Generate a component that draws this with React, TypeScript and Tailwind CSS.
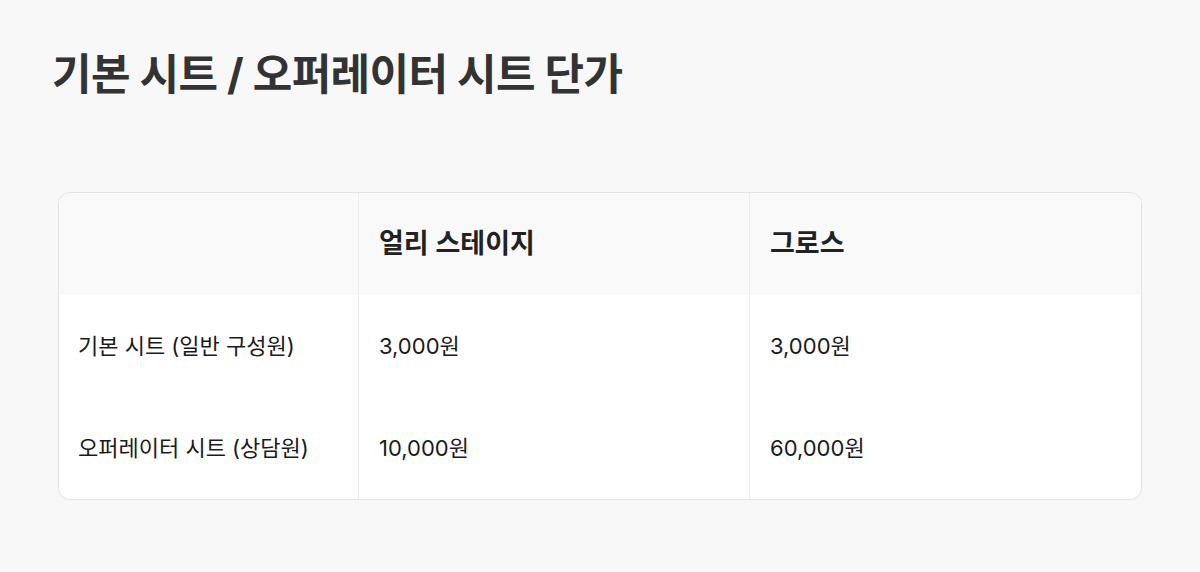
const font = { fontFamily: '"Inter", "Noto Sans CJK KR", sans-serif' };

const rows = [
  { label: "기본 시트 (일반 구성원)", early: "3,000원", growth: "3,000원" },
  { label: "오퍼레이터 시트 (상담원)", early: "10,000원", growth: "60,000원" },
];

export default function App() {
  return (
    <div className="min-h-[572px] w-[1200px] bg-[#f8f8f8] px-[58px] pt-[44px]" style={font}>
      <h1 className="-ml-[6px] text-[43px] font-bold leading-[60px] tracking-[-0.6px] text-[#333333]">
        기본 시트 / 오퍼레이터 시트 단가
      </h1>
      <div className="mt-[88px] overflow-hidden rounded-[12px] border border-[#e3e3e3] bg-white">
        <div className="grid grid-cols-[300px_391px_1fr] bg-[#f9f9f9]">
          <div className="h-[102px] border-r border-[#ececec]" />
          <div className="flex h-[102px] items-center border-r border-[#ececec] pl-[20px] text-[27px] font-semibold text-[#222222]">
            얼리 스테이지
          </div>
          <div className="flex h-[102px] items-center pl-[20px] text-[27px] font-semibold text-[#222222]">
            그로스
          </div>
        </div>
        {rows.map((r) => (
          <div key={r.label} className="grid grid-cols-[300px_391px_1fr] text-[22px] text-[#1a1a1a]">
            <div className="flex h-[102px] items-center border-r border-[#ececec] pl-[19px]">{r.label}</div>
            <div className="flex h-[102px] items-center border-r border-[#ececec] pl-[20px]">{r.early}</div>
            <div className="flex h-[102px] items-center pl-[20px]">{r.growth}</div>
          </div>
        ))}
      </div>
    </div>
  );
}
